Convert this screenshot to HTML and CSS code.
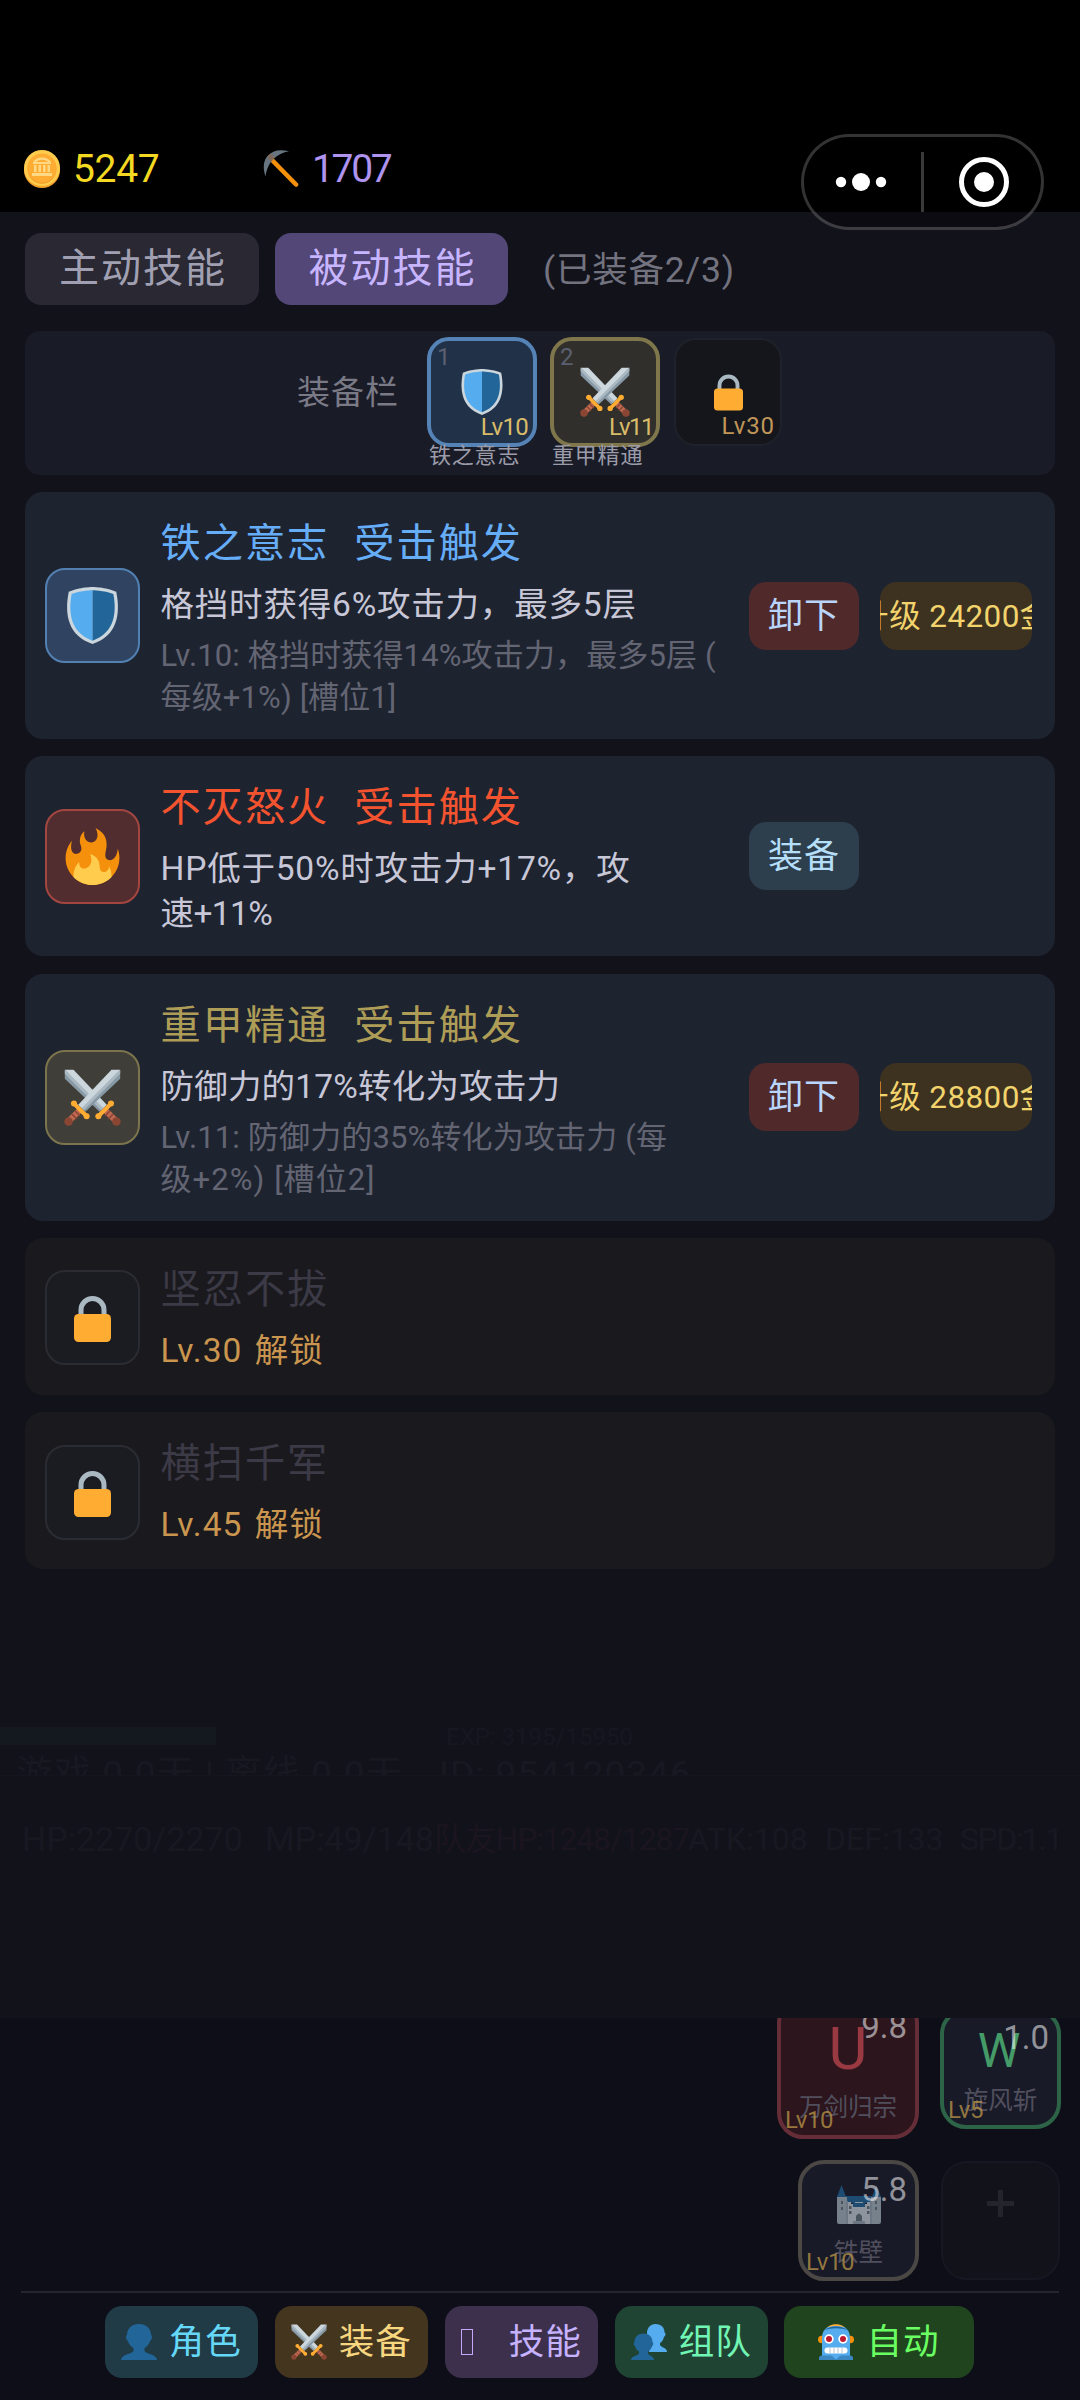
FILE: index.html
```html
<!DOCTYPE html>
<html lang="zh-CN">
<head>
<meta charset="utf-8">
<title>被动技能</title>
<link rel="stylesheet" href="styles.css">
</head>
<body>
<svg class="defs" aria-hidden="true">
  <symbol id="shield" viewBox="0 0 36 36">
    <path fill="#ccd6dd" d="M33 3c-7-3-15-3-15-3S10 0 3 3C0 18 3 31 18 36c15-5 18-18 15-33z"/>
    <path fill="#55acee" d="M18 33.9C6.4 29.7 2 19.8 4.8 4.4 11.100 2 18 2 18 2z"/>
    <path fill="#226699" d="M18 33.900c11.600-4.200 16-14.100 13.200-29.500C24.900 2 18 2 18 2z"/>
  </symbol>
  <symbol id="blade" viewBox="0 0 36 36">
    <path fill="#8899a6" d="M35.500.500v5.700L13.500 27 9.500 23z"/>
    <path fill="#ccd6dd" d="M30 .500h5.500L11.500 25l-2.500-2.500z"/>
    <path fill="#aab8c2" d="M35.500.500v2.500L12.500 26l-1.300-1.300z"/>
    <path stroke="#bf6952" stroke-width="3.800" d="M10.500 25.500l-7 7"/>
    <path stroke="#8a4633" stroke-width="1" d="M7 26.500l3 3M5 28.500l3 3"/>
    <circle cx="2.900" cy="33.100" r="2.700" fill="#8a4633"/>
    <path stroke="#ffac33" stroke-width="2.600" stroke-linecap="round" d="M6.500 22l8 8"/>
    <circle cx="6.300" cy="21.800" r="1.900" fill="#ffac33"/>
    <circle cx="14.300" cy="29.800" r="1.900" fill="#ffac33"/>
  </symbol>
  <symbol id="swords" viewBox="0 0 36 36">
    <use href="#blade" width="36" height="36" transform="matrix(-1 0 0 1 36 0)"/>
    <use href="#blade" width="36" height="36"/>
  </symbol>
  <symbol id="lock" viewBox="0 0 37 46">
    <path fill="none" stroke="#aab8c2" stroke-width="5" d="M7 22V14a11.500 11.500 0 0 1 23 0v8"/>
    <rect y="18" width="37" height="28" rx="4.500" fill="#ffac33"/>
  </symbol>
  <symbol id="fire" viewBox="0 0 36 36">
    <path fill="#f4900c" d="M35 19c0-2.062-.367-4.039-1.040-5.868-.460 5.389-3.333 8.157-6.335 6.868-2.812-1.208-.917-5.917-.777-8.164.236-3.809-.012-8.169-6.931-11.794 2.875 5.500.333 8.917-2.333 9.125-2.958.231-5.667-2.542-4.667-7.042-3.238 2.386-3.332 6.402-2.333 9 1.042 2.708-.042 4.958-2.583 5.208-2.840.280-4.418-3.041-2.963-8.333C2.520 10.965 1 14.805 1 19c0 9.389 7.611 17 17 17s17-7.611 17-17z"/>
    <path fill="#ffcc4d" d="M28.394 23.999c.148 3.084-2.561 4.293-4.019 3.709-2.106-.843-1.541-2.291-2.083-5.291s-2.625-5.083-5.708-6c2.250 6.333-1.247 8.667-3.080 9.084-1.872.426-3.753-.001-3.968-4.007C7.352 23.668 6 26.676 6 30c0 .368.023.730.055 1.090C9.125 34.124 13.342 36 18 36s8.875-1.876 11.945-4.910c.032-.360.055-.722.055-1.090 0-2.187-.584-4.236-1.606-6.001z"/>
  </symbol>
  <symbol id="coin" viewBox="0 0 36 38">
    <ellipse cx="18" cy="20" rx="18" ry="18" fill="#f4a12c"/>
    <ellipse cx="18" cy="18" rx="18" ry="18" fill="#ffcc4d"/>
    <ellipse cx="18" cy="19" rx="14.500" ry="15" fill="#f4a12c"/>
    <ellipse cx="18" cy="18" rx="14.500" ry="14.500" fill="#ffac33"/>
    <path fill="#ffd983" d="M18 7.500c-4 0-7 1.500-9 4.500v2h18v-2c-2-3-5-4.500-9-4.500zM10 15h2.500v7H10zm4.500 0H17v7h-2.500zm4.500 0h2.500v7H19zm4.500 0H26v7h-2.500zM8 23h20v3H8z"/>
    <path fill="#ffac33" d="M11.500 12q6.500-4.500 13 0z"/>
  </symbol>
  <symbol id="pick" viewBox="0 0 36 38">
    <path stroke="#f4900c" stroke-width="4.600" stroke-linecap="round" d="M8 9l25 25.500"/>
    <path fill="#66757f" d="M2.500 26.500C-.500 17 .500 11 4.500 6 9.500.500 16-.800 26 1.300c-6 1-11.500 4-15.500 7.700C6.500 13 3.500 19 2.500 26.500z"/>
    <path fill="#7d6a5c" d="M4 7l4-3.500L12 7l-4 5z"/>
  </symbol>
  <symbol id="bust" viewBox="0 0 36 36">
    <path fill="#226699" d="M18 0c7 0 12 4.500 12 11 1.500.500 1.200 5-.800 5.500-1 3.500-3 6-5.700 7.500v3c1.500 3 12.500 3.500 12.500 9H0c0-5.500 11-6 12.500-9v-3c-2.700-1.500-4.700-4-5.700-7.500-2-.500-2.300-5-.800-5.500C6 4.500 11 0 18 0z"/>
  </symbol>
  <symbol id="busts" viewBox="0 0 36 36">
    <path fill="#55acee" d="M24.500 0c6 0 9 4 9 8.500 1.500.500 1.200 4-.500 4.200-.500 2.800-2 5-4 6.300v2c1 2.500 7 2.500 7 7H18c0-4.500 3-4.500 3.500-7v-2c-3.500-1.500-5.500-5.500-5.500-10S19 0 24.500 0z"/>
    <path fill="#226699" d="M12.500 9.500c5.500 0 9 3.500 9 8.500 1.300.500 1 3.500-.500 4-.700 2.700-2 4.500-4 5.500v2c1 2.500 6 2.500 6 6.500H0c0-4 7-4 8-6.500v-2c-2-1-3.300-2.800-4-5.500-1.500-.500-1.800-3.500-.500-4 0-5 3.500-8.500 9-8.500z"/>
  </symbol>
  <symbol id="robot" viewBox="0 0 36 36">
    <circle cx="3.800" cy="15.500" r="3.800" fill="#f4900c"/><circle cx="32.200" cy="15.500" r="3.800" fill="#f4900c"/>
    <path fill="#ffac33" d="M8 5C11-1.500 25-1.500 28 5z"/>
    <path fill="#55acee" d="M4 33V15C4 8 6 6 9 3.500 14 1.500 22 1.500 27 3.500 30 6 32 8 32 15v18z"/>
    <path fill="#226699" d="M6.500 6.500C11 1 25 1 29.500 6.500 25 3.500 11 3.500 6.500 6.500z"/>
    <path fill="#3b88c3" d="M1 36v-1.500c0-2 1-3 3-3h28c2 0 3 1 3 3V36z"/>
    <path fill="#55acee" d="M13 31h10l-5 4.500z"/>
    <circle cx="11" cy="15" r="4.700" fill="#fff"/><circle cx="25" cy="15" r="4.700" fill="#fff"/>
    <circle cx="11" cy="15" r="3" fill="#be1931"/><circle cx="25" cy="15" r="3" fill="#be1931"/>
    <rect x="6.500" y="23.500" width="23" height="6" rx="3" fill="#fff"/>
    <path stroke="#aab8c2" stroke-width=".800" d="M12 23.500v6m4-6v6m4-6v6m4-6v6"/>
  </symbol>
  <symbol id="castle" viewBox="0 0 44 40">
    <path fill="#226699" d="M4.500 0L9.500 13h-10zM39.500 0l5 13h-10zM9 11h26v7H9z"/>
    <path fill="#aab8c2" d="M0 12h10v27H2q-2 0-2-2zM34 12h10v25q0 2-2 2h-8z"/>
    <path fill="#ccd6dd" d="M10 17h4v2h4v-2h8v2h4v-2h4v22H10z"/>
    <path fill="#99aab5" d="M9 16h2v23H9zM33 16h2v23h-2zM16 36h12v3H16z"/>
    <path fill="#66757f" d="M19 36v-5q3-5 6 0v5zM4 16h2v3H4zm0 6h2v3H4zm8-1h2.500v3H12zm0 5h2.500v3H12zm18-5h2.500v3H30zm0 5h2.500v3H30zm8-10h2v3h-2zm0 6h2v3h-2z"/>
    <path fill="#226699" d="M16 18h12v4H16z"/>
  </symbol>
</svg>

<div class="screen">
  <header class="topbar">
    <div class="coin"><svg class="i-coin"><use href="#coin"/></svg><span>5247</span></div>
    <div class="ore"><svg class="i-coin"><use href="#pick"/></svg><span>1707</span></div>
    <div class="capsule">
      <svg viewBox="0 0 237 90">
        <g fill="#fff"><circle cx="37" cy="45" r="5.200"/><circle cx="57" cy="45" r="9"/><circle cx="77" cy="45" r="5.200"/><circle cx="180" cy="45" r="10"/></g>
        <circle cx="180" cy="45" r="22.500" fill="none" stroke="#fff" stroke-width="5"/>
        <path stroke="#3a3a3a" stroke-width="3" d="M118.500 15v60"/>
      </svg>
    </div>
  </header>

  <main class="panel">
    <nav class="tabs">
      <span class="tab">主动技能</span>
      <span class="tab on">被动技能</span>
      <span class="count">(已装备2/3)</span>
    </nav>

    <section class="equip">
      <span class="equip-label">装备栏</span>
      <div class="slot blue"><i class="no">1</i><svg class="s-shield"><use href="#shield"/></svg><i class="lv">Lv10</i><i class="nm">铁之意志</i></div>
      <div class="slot gold"><i class="no">2</i><svg class="s-swords"><use href="#swords"/></svg><i class="lv tight">Lv11</i><i class="nm">重甲精通</i></div>
      <div class="slot locked"><svg class="s-lock"><use href="#lock"/></svg><i class="lv">Lv30</i></div>
    </section>

    <section class="list">
      <article class="card">
        <div class="icon blue"><svg><use href="#shield"/></svg></div>
        <div class="info">
          <h2 class="t-blue">铁之意志<span>受击触发</span></h2>
          <p class="desc">格挡时获得6%攻击力，最多5层</p>
          <p class="note">Lv.10: 格挡时获得14%攻击力，最多5层 (<br>每级+1%) [槽位1]</p>
        </div>
        <div class="acts"><b class="btn off">卸下</b><b class="btn up"><span>升级 24200金</span></b></div>
      </article>
      <article class="card">
        <div class="icon red"><svg><use href="#fire"/></svg></div>
        <div class="info">
          <h2 class="t-red">不灭怒火<span>受击触发</span></h2>
          <p class="desc">HP低于50%时攻击力+17%，攻<br><span class="tail">速+11%</span></p>
        </div>
        <div class="acts"><b class="btn wear">装备</b></div>
      </article>
      <article class="card">
        <div class="icon gold"><svg><use href="#swords"/></svg></div>
        <div class="info">
          <h2 class="t-gold">重甲精通<span>受击触发</span></h2>
          <p class="desc close">防御力的17%转化为攻击力</p>
          <p class="note">Lv.11: 防御力的35%转化为攻击力 (每<br><span class="wide">级+2%) [槽位2]</span></p>
        </div>
        <div class="acts"><b class="btn off">卸下</b><b class="btn up"><span>升级 28800金</span></b></div>
      </article>
      <article class="card dim">
        <div class="icon"><svg class="c-lock"><use href="#lock"/></svg></div>
        <div class="info"><h2>坚忍不拔</h2><p class="desc">Lv.30 解锁</p></div>
      </article>
      <article class="card dim">
        <div class="icon"><svg class="c-lock"><use href="#lock"/></svg></div>
        <div class="info"><h2>横扫千军</h2><p class="desc">Lv.45 解锁</p></div>
      </article>
    </section>

    <section class="ghost">
      <div class="exp"><span>EXP: 3195/15950</span></div>
      <div class="online"><span class="time">游戏 0.0天 | 离线 0.0天</span><span>ID: 954120346</span></div>
      <div class="stats"><span class="hp">HP:2270/2270</span><span class="mp">MP:49/148</span><span class="mate">队友HP:1248/1287</span><span class="atk">ATK:108</span><span class="def">DEF:133</span><span class="spd">SPD:1.1</span></div>
    </section>
  </main>

  <footer class="hud">
    <div class="skills">
      <div class="row">
        <div class="skill big"><em>U</em><i class="cd">9.8</i><i class="sn">万剑归宗</i><i class="sl">Lv10</i></div>
        <div class="skill green"><em>W</em><i class="cd">1.0</i><i class="sn">旋风斩</i><i class="sl">Lv5</i></div>
      </div>
      <div class="row">
        <div class="skill wall"><svg><use href="#castle"/></svg><i class="cd">5.8</i><i class="sn">铁壁</i><i class="sl">Lv10</i></div>
        <div class="skill empty"><svg viewBox="0 0 27 27"><path d="M13.500 0v27M0 13.500h27"/></svg></div>
      </div>
    </div>
    <nav class="menu">
      <span class="m1"><svg><use href="#bust"/></svg>角色</span>
      <span class="m2"><svg><use href="#swords"/></svg>装备</span>
      <span class="m3"><u></u>技能</span>
      <span class="m4"><svg><use href="#busts"/></svg>组队</span>
      <span class="m5"><svg><use href="#robot"/></svg>自动</span>
    </nav>
  </footer>
</div>
</body>
</html>
```
FILE: styles.css
```css
* { box-sizing: border-box; margin: 0; padding: 0; }
body { background: #0e0e18; font-family: Roboto, "Noto Sans CJK SC", sans-serif; }
i, em, b { font-style: normal; font-weight: 400; }
svg { display: block; flex: none; }
.defs { position: absolute; width: 0; height: 0; }
.screen { width: 1080px; height: 2400px; display: flex; flex-direction: column; overflow: hidden; white-space: nowrap; }

.topbar { position: relative; height: 212px; background: #000; display: flex; align-items: flex-start; padding: 144px 0 0 24px; font-size: 39px; line-height: 50px; letter-spacing: -.300px; }
.coin, .ore { display: flex; align-items: center; gap: 13px; }
.coin { width: 239px; color: #f4d821; }
.ore { color: #ae93ef; letter-spacing: -2.300px; }
.i-coin { width: 36px; height: 38px; }
.capsule { position: absolute; left: 801px; top: 134px; width: 243px; height: 96px; border: 3px solid rgba(255,255,255,.2); border-radius: 48px; background: rgba(0,0,0,.35); z-index: 1; }
.capsule svg { width: 237px; height: 90px; }

.panel { height: 1806px; background: #12121b; padding: 21px 25px 0; }
.tabs { display: flex; gap: 16px; height: 72px; align-items: center; }
.tab { width: 234px; height: 72px; line-height: 72px; border-radius: 16px; background: #292833; color: #a0a0b2; font-size: 40px; letter-spacing: 2px; text-align: center; padding-left: 2px; }
.tab.on { width: 233px; background: #524777; color: #c8b5ff; }
.count { margin: 0 0 6px 19px; color: #73737f; font-size: 35.500px; letter-spacing: .8px; }

.equip { margin-top: 26px; height: 144px; border-radius: 15px; background: #191b27; display: flex; align-items: flex-start; padding: 6px 0 0 272px; gap: 13px; }
.equip-label { width: 117px; line-height: 111px; font-size: 33px; letter-spacing: 1px; color: #7a7a86; }
.slot { position: relative; width: 110px; height: 110px; border: 4px solid; border-radius: 22px; display: flex; align-items: center; justify-content: center; }
.slot.blue { background: #213148; border-color: #5683b5; }
.slot.gold { background: #302f2c; border-color: #7f774b; }
.slot.locked { width: 108px; height: 108px; margin: 1px 0 0 1px; border: 2px solid #1f212b; background: #14161c; }
.s-shield { width: 46px; height: 50px; }
.s-swords { width: 50px; height: 50px; }
.s-lock { width: 29px; height: 37px; }
.slot i { position: absolute; line-height: 24px; }
.no { left: 6px; top: 4px; font-size: 24px; color: #5b6070; }
.lv { right: 5px; bottom: 4px; font-size: 24px; letter-spacing: -.700px; color: #d9bc68; }
.lv.tight { letter-spacing: -1.500px; right: 3px; }
.locked .lv { color: #c09658; bottom: 6px; letter-spacing: .900px; }
.nm { left: -2px; top: 103px; font-size: 22px; letter-spacing: .8px; color: #9b9ba9; }

.list { margin-top: 17px; display: flex; flex-direction: column; gap: 17.250px; }
.card { min-height: 157px; border-radius: 18px; background: #1e2330; display: flex; padding: 24px 23px 24px 20px; align-items: center; }
.icon { width: 95px; height: 95px; border: 2px solid #2b2b33; border-radius: 20px; background: #1b1c22; display: flex; align-items: center; justify-content: center; }
.icon.blue { background: #304461; border-color: #5280b3; }
.icon.red { background: #512d2f; border-color: #a34640; }
.icon.gold { background: #3f3e38; border-color: #7b744c; }
.icon svg { width: 57px; height: 57px; }
.icon .c-lock { width: 37px; height: 46px; margin-top: 3px; }
.info { margin: 2px 0 -4px 20.500px; width: 588.500px; align-self: flex-start; }
.info h2 { font-size: 40.200px; line-height: 52px; font-weight: 400; letter-spacing: 2px; color: #3b3a46; }
.info h2 span { margin-left: 25px; }
.desc { margin-top: 12px; font-size: 33.500px; line-height: 45px; letter-spacing: .8px; color: #c7c7d7; }
.desc.close { letter-spacing: .2px; }
.desc .tail { letter-spacing: -.600px; }
.note { margin-top: 8px; font-size: 31px; line-height: 42px; letter-spacing: .15px; color: #636573; }
.note .wide { letter-spacing: 1.100px; }
.card .t-blue { color: #66adf8; }
.card .t-red { color: #f4532f; }
.card .t-gold { color: #ae9d56; }
.card.dim { background: #1a191d; padding-bottom: 21px; padding-top: 24px; }
.dim .desc { color: #c9954f; letter-spacing: 1px; word-spacing: 3px; }
.acts { display: flex; gap: 21px; }
.btn { width: 110px; height: 68px; border-radius: 17px; font-size: 35px; letter-spacing: 1px; line-height: 69px; text-align: center; color: #b9d5fc; display: flex; justify-content: center; overflow: hidden; }
.off { background: #502a2b; }
.wear { background: #2d3e4c; color: #b5def9; }
.up { width: 152px; background: #3d3220; color: #f2d36c; font-size: 31.500px; letter-spacing: .4px; }
.up span { flex: none; margin-left: -3px; }

.ghost { margin: 158px -25px 0; color: #181821; }
.exp { height: 18px; background: linear-gradient(90deg, #14181f 216px, transparent 216px); padding-left: 446px; font-size: 24px; line-height: 20px; color: #171720; }
.online { margin-top: 7px; height: 24px; overflow: hidden; border-bottom: 1px solid #15151e; display: flex; padding-left: 16px; font-size: 37px; letter-spacing: 1px; line-height: 45px; }
.time { width: 423px; }
.stats { display: flex; margin-top: 43px; padding-left: 22px; font-size: 32px; line-height: 40px; }
.stats .hp { width: 243px; font-size: 34px; }
.stats .mp { width: 169px; font-size: 34px; }
.stats .mate { width: 254px; color: #1b151f; letter-spacing: -1.200px; }
.stats .atk { width: 137px; }
.stats .def { width: 135px; }
.stats .spd { letter-spacing: -1.500px; }

.hud { position: relative; height: 382px; overflow: hidden; background: #0e0e18; }
.skills { height: 275px; margin: 0 21px; border-bottom: 2px solid #24242d; display: flex; flex-direction: column; gap: 21px; }
.row { display: flex; justify-content: flex-end; align-items: center; gap: 21px; margin-right: -2px; }
.row:first-child { margin-top: -21px; }
.row:last-child { gap: 22px; }
.skill { position: relative; width: 121px; height: 121px; border: 4px solid; border-radius: 26px; background: #181a28; display: flex; flex-direction: column; align-items: center; }
.skill i { position: absolute; }
.skill em { line-height: 40px; margin-top: 19px; margin-right: 3px; font-size: 48px; }
.big { width: 142px; height: 142px; background: #2c151c; border-color: #652d37; }
.big em { font-size: 60px; margin: 28px 0 0; color: #993941; }
.green { border-color: #2d6347; color: #459b67; }
.wall { border-color: #4a4744; }
.wall svg { width: 44px; height: 40px; margin-top: 21px; opacity: .65; }
.empty { width: 119px; height: 119px; margin-right: 1px; border: 2px solid #171722; background: #11121a; }
.empty svg { width: 27px; height: 27px; margin-top: 27px; stroke: #24242c; stroke-width: 5; }
.skill .cd { right: 8px; top: 8px; font-size: 33px; line-height: 36px; color: rgba(255,255,255,.53); }
.skill .sn { bottom: 11px; left: -10px; right: -10px; text-align: center; font-size: 24.500px; line-height: 26px; color: #514f5d; }
.skill .sl { left: 4px; bottom: 3px; font-size: 24px; line-height: 24px; letter-spacing: -.500px; color: rgba(183,146,70,.78); }
.big .sn { bottom: 14px; }

.menu { display: flex; gap: 17.500px; margin: 13px 0 0 105px; }
.menu span { width: 152.500px; height: 72px; border-radius: 17px; display: flex; align-items: center; justify-content: center; gap: 12px; font-size: 35.500px; letter-spacing: 1px; line-height: 74px; }
.menu svg { width: 36px; height: 36px; }
.menu u { width: 12px; height: 26px; border: 1.500px solid #c3a9f7; margin-right: 24px; }
.m1 { background: #203b45; color: #65d7f7; }
.m2 { background: #44351f; color: #f7d680; }
.m3 { background: #3c304c; color: #c6b2ff; }
.m4 { background: #204434; color: #71f5b4; }
.menu .m5 { width: 190px; margin-left: -1px; background: #20441e; color: #6aff62; }
```
